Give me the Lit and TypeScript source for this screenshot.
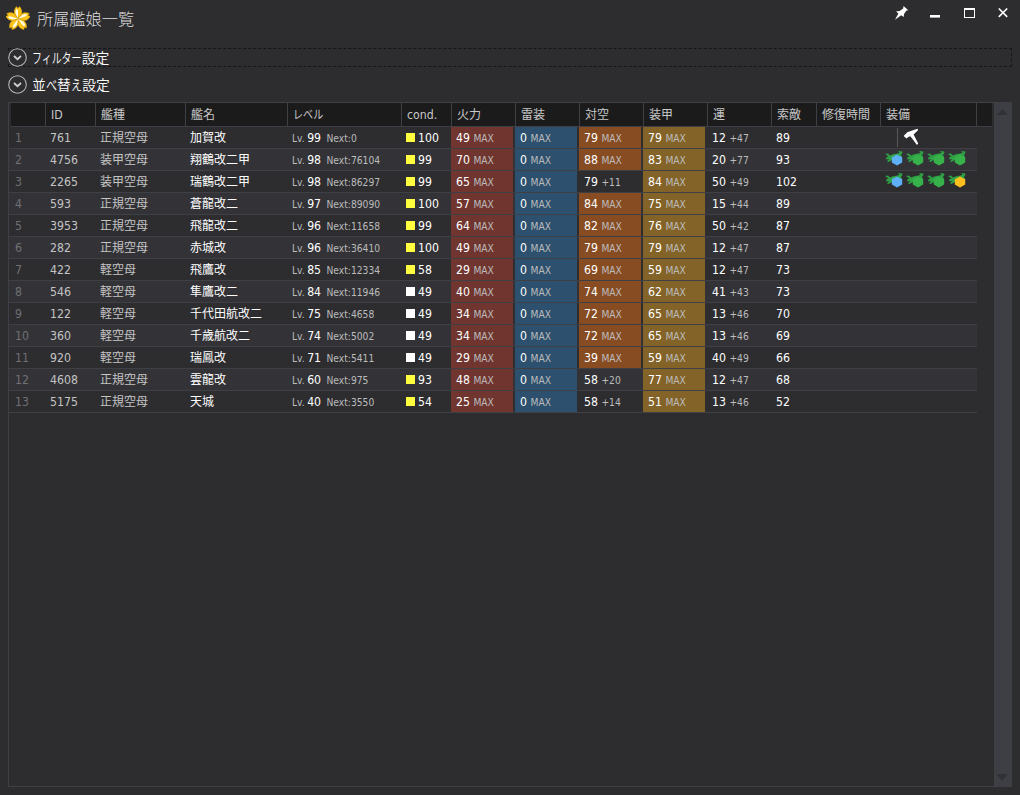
import { LitElement, html, svg, css } from "lit";
import { customElement } from "lit/decorators.js";
import { classMap } from "lit/directives/class-map.js";

type Ship = [id: number, type: string, name: string, lv: number, next: number, cond: number,
  fire: number, torp: number, aa: string, armor: number, luck: string, scout: number, gear?: string];

const SHIPS: Ship[] = [
  [761, "正規空母", "加賀改", 99, 0, 100, 49, 0, "79", 79, "12 +47", 89, "hammer"],
  [4756, "装甲空母", "翔鶴改二甲", 98, 76104, 99, 70, 0, "88", 83, "20 +77", 93, "bggg"],
  [2265, "装甲空母", "瑞鶴改二甲", 98, 86297, 99, 65, 0, "79 +11", 84, "50 +49", 102, "bggy"],
  [593, "正規空母", "蒼龍改二", 97, 89090, 100, 57, 0, "84", 75, "15 +44", 89],
  [3953, "正規空母", "飛龍改二", 96, 11658, 99, 64, 0, "82", 76, "50 +42", 87],
  [282, "正規空母", "赤城改", 96, 36410, 100, 49, 0, "79", 79, "12 +47", 87],
  [422, "軽空母", "飛鷹改", 85, 12334, 58, 29, 0, "69", 59, "12 +47", 73],
  [546, "軽空母", "隼鷹改二", 84, 11946, 49, 40, 0, "74", 62, "41 +43", 73],
  [122, "軽空母", "千代田航改二", 75, 4658, 49, 34, 0, "72", 65, "13 +46", 70],
  [360, "軽空母", "千歳航改二", 74, 5002, 49, 34, 0, "72", 65, "13 +46", 69],
  [920, "軽空母", "瑞鳳改", 71, 5411, 49, 29, 0, "39", 59, "40 +49", 66],
  [4608, "正規空母", "雲龍改", 60, 975, 93, 48, 0, "58 +20", 77, "12 +47", 68],
  [5175, "正規空母", "天城", 40, 3550, 54, 25, 0, "58 +14", 51, "13 +46", 52],
];

const HEADS = ["", "ID", "艦種", "艦名", "レベル", "cond.", "火力", "雷装", "対空", "装甲", "運", "索敵", "修復時間", "装備"];
const HEX: Record<string, string> = { b: "#5db0f5", g: "#37b24a", y: "#ffc01e" };

@customElement("app-root")
export class AppRoot extends LitElement {
  static styles = css`
    :host {
      display: flex; flex-direction: column; box-sizing: border-box; width: 1020px; height: 795px;
      background: #2d2d30; color: #fff; overflow: hidden;
      font: 12.2px/20px "DejaVu Sans Condensed", "Noto Sans", "Noto Sans CJK JP", sans-serif;
    }
    svg { display: block; flex: none; }
    .title { display: flex; height: 44px; }
    .logo { margin: 6px 0 0 6px; }
    .caption { margin: 7px 0 0 7px; font: 16.2px/22px "Noto Sans CJK JP", sans-serif; font-weight: 300; color: #dcdcdc; flex: 1; }
    .buttons { margin-right: 8px; }
    .expander { display: flex; align-items: center; box-sizing: border-box; height: 19px; margin: 4px 8px 0; border: 1px solid transparent; }
    .expander.focus { border: 1px dashed #161617; }
    .expander + .expander { margin-top: 8px; }
    .expander svg { margin-left: -1px; }
    .label { font: 13.8px/18px "Noto Sans CJK JP", sans-serif; font-weight: 350; margin: -2px 0 0 5px; white-space: nowrap; }
    .kana { display: inline-block; transform: scaleX(0.72); transform-origin: left; margin-right: -19px; }
    .kana1 { display: inline-block; transform: scaleX(0.8); transform-origin: left; margin-right: -2.5px; }
    .list { display: flex; box-sizing: border-box; margin: 8px; flex: 1; border: 1px solid #3f3f46; border-right: 0; }
    .table { width: 985px; }
    .header, .row { display: grid; grid-template-columns: 35px 50px 90px 102px 114px 50px 64px 64px 64px 64px 64px 45px 64px 96px; }
    .header { margin: 0 2px; height: 24px; box-sizing: border-box; background: #1b1b1c; border-bottom: 1px solid #3f3f46; color: #c8c8c8; }
    .head { border-right: 1px solid #3f3f46; padding: 1px 0 0 5px; line-height: 22px; height: 22px; white-space: nowrap; }
    .head .kana { transform: scaleX(0.84); }
    .cjk { font-size: 12px; }
    .row { width: 968px; box-sizing: border-box; height: 22px; padding-left: 1px; border-bottom: 1px solid #3f3f46; }
    .row.alt { background: #333337; }
    .cell { padding: 1px 0 0 5px; white-space: nowrap; line-height: 21px; height: 20px; }
    .num { color: #707074; }
    .dim { color: #c4c4c4; }
    .small { font-size: 10.2px; color: #bcbcbc; }
    .lead { margin-right: -1px; }
    .next { margin-left: -1px; }
    .stat { margin-right: 2px; }
    .fire { background: #70352f; }
    .torp { background: #2d506e; }
    .aa { background: #884c22; }
    .armor { background: #836328; }
    .cond { display: inline-block; width: 9px; height: 9px; margin-right: 3px; background: #fff; }
    .cond.high { background: #ffff40; }
    .gear { display: flex; gap: 2px; padding: 1px 0 0 5px; }
    .scroll { width: 18px; margin: -1px 0 -1px; background: #3e3e45; display: flex; flex-direction: column; justify-content: space-between; }
  `;

  private stat(kind: string, text: string) {
    const [value, rest] = text.split(" ");
    const max = !rest && kind !== "luck";
    return html`<div class=${classMap({ cell: true, stat: true, [kind]: max })}>${value} <span class="small">${rest ?? "MAX"}</span></div>`;
  }

  private gear(kind?: string) {
    if (!kind) return "";
    if (kind === "hammer")
      return html`<svg width="36" height="19" viewBox="0 0 36 19"><path d="M12.5 0v19" stroke="#58585b" /><path d="M18.6 8 L22.3 4.2 Q27 2.6 32.6 .8 L33 2.2 L28.6 6.4 L33.2 15.4 L32 17 L25.6 8.6 L24 8.4 L21.5 10.6Z" fill="#fff" /></svg>`;
    return [...kind].map((c) => html`<svg width="19" height="18" viewBox="0 0 19 18">
      <path d="M0 4 L3 3.6 L5 5.4 L8 4.2 L12.5 3.6 L14.6 2.4 L13 1.2 L15 1 L16 1.8 L17 .8 L17.4 3 L16 5 L17 7 L9 9 L6 10.6 L3.6 12 L2 11.4 L4 9 L1 9.6 L1.6 7 L3.6 6.6Z" fill="#2fa044" />
      <path d="M12 4.4 L17.2 7.2 V12.6 L12 15.4 L6.8 12.6 V7.2Z" fill=${HEX[c]} /></svg>`);
  }

  private chevron() {
    return html`<svg width="19" height="19" viewBox="0 0 19 19" fill="none"><circle cx="9.5" cy="9.5" r="8.8" stroke="#b4b4b4" stroke-width="1.1" /><path d="M6 8l3.5 3.2L13 8" stroke="#d0d0d0" stroke-width="1.8" /></svg>`;
  }

  render() {
    return html`
      <div class="title">
        <svg class="logo" width="24" height="24" viewBox="0 0 24 24">
          ${[0, 72, 144, 216, 288].map((a) => svg`<g transform="rotate(${a} 12 12.8)"><path d="M12 12.8 L8.4 8 Q7.2 4 10.4 .4 L12 2.2 L13.6 .4 Q16.8 4 15.6 8Z" fill="#fbc41a" stroke="#c98f10" stroke-width=".4" /><path d="M12 12.8 L9.6 7.6 Q9 4.6 10.6 2.6 L12 4.6Z" fill="#fffbe6" /></g>`)}
        </svg>
        <div class="caption">所属艦娘一覧</div>
        <svg class="buttons" width="120" height="28" viewBox="892 0 120 28">
          <path d="M903.5 6 L908.3 10.2 L906.5 10.6 L904 14 L903.7 17 L901.2 15.2 L895 19.8 L898.4 13.6 L896 11.4 L899.6 11 L903.2 8.4Z" fill="#fff" />
          <path d="M930 16.3h10" stroke="#fff" stroke-width="2.6" />
          <path d="M964 8h11v10h-11z M965 10v7h9v-7z" fill="#fff" fill-rule="evenodd" />
          <path d="M998.8 8.5l8.4 8.4M1007.2 8.5l-8.4 8.4" stroke="#fff" stroke-width="1.6" />
        </svg>
      </div>
      <div class="expander focus">${this.chevron()}<div class="label"><span class="kana">フィルター</span>設定</div></div>
      <div class="expander">${this.chevron()}<div class="label">並<span class="kana1">べ</span>替<span class="kana1">え</span>設定</div></div>
      <div class="list">
        <div class="table">
          <div class="header">${HEADS.map((h) => html`<div class=${classMap({ head: true, cjk: h !== "ID" && h !== "cond." })}>${h === "レベル" ? html`<span class="kana">${h}</span>` : h}</div>`)}</div>
          ${SHIPS.map(([id, type, name, lv, next, cond, fire, torp, aa, armor, luck, scout, gear], i) => html`
            <div class=${classMap({ row: true, alt: i % 2 === 1 })}>
              <div class="cell num">${i + 1}</div>
              <div class="cell dim">${id}</div>
              <div class="cell dim cjk">${type}</div>
              <div class="cell cjk">${name}</div>
              <div class="cell"><span class="small lead">Lv.</span> ${lv} <span class="small next">&nbsp;Next:${next}</span></div>
              <div class="cell"><span class=${classMap({ cond: true, high: cond > 49 })}></span>${cond}</div>
              ${this.stat("fire", `${fire}`)}${this.stat("torp", `${torp}`)}${this.stat("aa", aa)}${this.stat("armor", `${armor}`)}${this.stat("luck", luck)}
              <div class="cell">${scout}</div>
              <div class="cell"></div>
              <div class="gear">${this.gear(gear)}</div>
            </div>`)}
        </div>
        <div class="scroll">
          <svg width="18" height="20" viewBox="0 0 18 20"><path d="M3 13l5.5-6 5.5 6z" fill="#303035" /></svg>
          <svg width="18" height="20" viewBox="0 0 18 20"><path d="M2 7h12l-6 6.5z" fill="#303035" /></svg>
        </div>
      </div>`;
  }
}
